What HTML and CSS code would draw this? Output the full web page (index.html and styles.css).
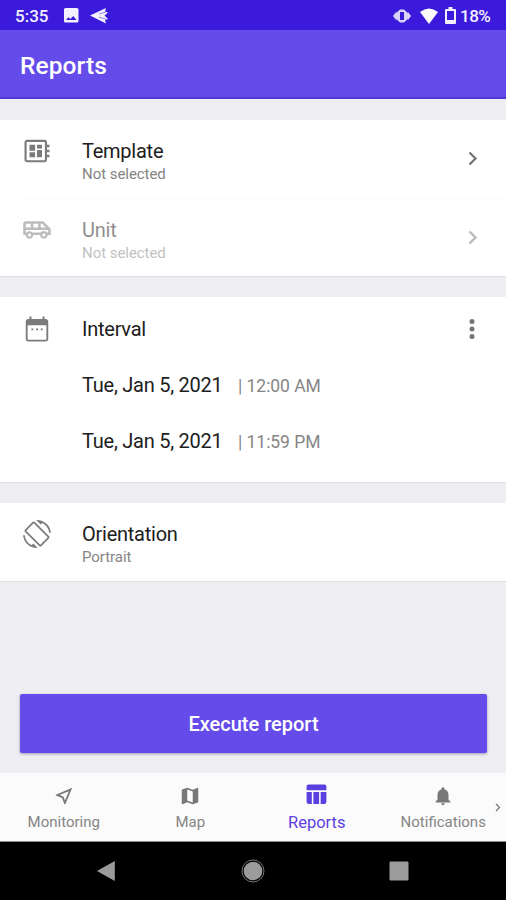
FILE: index.html
```html
<!DOCTYPE html>
<html lang="en">
<head>
<meta charset="utf-8">
<title>Reports</title>
<link rel="stylesheet" href="styles.css">
</head>
<body>
<div class="screen">
  <div class="status">
    <span class="clock">5:35</span>
    <svg class="s-image" viewBox="3 3 18 18"><path d="M21 19V5c0-1.100-.9-2-2-2H5c-1.100 0-2 .9-2 2v14c0 1.100.9 2 2 2h14c1.100 0 2-.9 2-2zM8.500 14.500l2.500 2 3.500-3.500 4 5H5.500z"/></svg>
    <svg class="s-plane" viewBox="0 0 18 16"><path d="M0 7.500 16 0l-1 3.500 3 1-3.500 3L18 11l-3 1 1 3.500z"/><path class="cut" d="M9 6l7-2M9 9.200l7 2"/></svg>
    <span class="spacer"></span>
    <svg class="s-vibrate" viewBox="0 0 18 14"><path d="M0 7l3-4v8zM18 7l-3-4v8z"/><path fill-rule="evenodd" d="M7 .5h4L15 4v6l-4 3.500H7L3 10V4zM7 3v8h4V3z"/></svg>
    <svg class="s-wifi" viewBox="0 0 18 16"><path d="M0 4Q9-3 18 4L9 16z"/></svg>
    <svg class="s-battery" viewBox="0 0 11 17"><path fill-rule="evenodd" d="M3.500 0h4v2H10q1 0 1 1v13q0 1-1 1H1q-1 0-1-1V3q0-1 1-1h2.500zM2 4v9h7V4z"/></svg>
    <span class="percent">18%</span>
  </div>
  <header class="appbar"><h1>Reports</h1></header>
  <main>
    <section class="card">
      <div class="row">
        <svg class="icon" viewBox="0 0 24 24"><path d="M22 9V7h-2V5c0-1.100-.9-2-2-2H4c-1.100 0-2 .9-2 2v14c0 1.100.9 2 2 2h14c1.100 0 2-.9 2-2v-2h2v-2h-2v-2h2v-2h-2V9h2zm-3.700 10.300H3.700V4.700h14.600v14.600zM6 13h4.500v4H6zm6-6h4v3h-4zM6 7h4.500v4.800H6zm6 4.200h4V17h-4z"/></svg>
        <div class="label"><span class="title">Template</span><span class="sub">Not selected</span></div>
        <svg class="chevron" viewBox="0 0 10 15"><path d="M1.500 1.500 7.500 7.500l-6 6"/></svg>
      </div>
      <div class="divider"></div>
      <div class="row disabled">
        <svg class="icon" viewBox="0 0 24 24"><path d="M17 5H3c-1.100 0-2 .89-2 2v9h2c0 1.650 1.340 3 3 3s3-1.350 3-3h5.500c0 1.650 1.340 3 3 3s3-1.350 3-3H23v-5l-6-6zm-2 2h1l3 3h-4V7zM9 7h4v3H9V7zM3 7h4v3H3V7zm3 10.250c-.69 0-1.250-.56-1.250-1.250s.56-1.250 1.250-1.250 1.250.56 1.250 1.250-.56 1.250-1.250 1.250zm11.500 0c-.69 0-1.250-.56-1.250-1.250s.56-1.250 1.250-1.250 1.250.56 1.250 1.250-.56 1.250-1.250 1.250zM21 14h-.78c-.55-.61-1.340-1-2.220-1h-1c-.88 0-1.670.39-2.220 1H8.220c-.55-.61-1.330-1-2.220-1s-1.670.39-2.220 1H3v-2h18v2z"/></svg>
        <div class="label"><span class="title">Unit</span><span class="sub">Not selected</span></div>
        <svg class="chevron" viewBox="0 0 10 15"><path d="M1.500 1.500 7.500 7.500l-6 6"/></svg>
      </div>
    </section>
    <section class="card interval">
      <div class="head">
        <svg class="icon" viewBox="0 0 24 24"><path d="M7.500 11.500h1.500v1.500H7.500zm3.750 0h1.500v1.500h-1.500zm3.750 0h1.500v1.500H15zM19 4h-1V2h-1.600v2H7.600V2H6v2H5c-1.110 0-2 .9-2 2v14c0 1.100.89 2 2 2h14c1.100 0 2-.9 2-2V6c0-1.100-.9-2-2-2zm.5 16q0 .5-.5.5H5q-.5 0-.5-.5V9h15z"/></svg>
        <span class="title">Interval</span>
        <svg class="more" viewBox="0 0 6 20"><circle cx="3" cy="2.600" r="2.500"/><circle cx="3" cy="10" r="2.500"/><circle cx="3" cy="17.400" r="2.500"/></svg>
      </div>
      <div class="date"><span class="title">Tue, Jan 5, 2021</span><span class="time">| 12:00 AM</span></div>
      <div class="date"><span class="title">Tue, Jan 5, 2021</span><span class="time">| 11:59 PM</span></div>
    </section>
    <section class="card">
      <div class="row last">
        <svg class="icon rotate" viewBox="0 0 24 24"><path d="M16.480 2.520c3.270 1.550 5.610 4.720 5.970 8.480h1.500C23.440 4.840 18.290 0 12 0l-.66.03 3.810 3.810 1.330-1.320zm-6.250-.77c-.59-.59-1.540-.59-2.120 0L1.750 8.110c-.59.59-.59 1.540 0 2.120l12.020 12.020c.59.59 1.540.59 2.120 0l6.360-6.360c.59-.59.59-1.540 0-2.120L10.230 1.750zm4.600 19.440L2.810 9.170l6.360-6.360 12.020 12.020-6.360 6.360zm-7.310.29C4.250 19.940 1.910 16.760 1.550 13H.05C.56 19.160 5.710 24 12 24l.66-.03-3.810-3.810-1.330 1.320z"/></svg>
        <div class="label"><span class="title">Orientation</span><span class="sub">Portrait</span></div>
      </div>
    </section>
    <button class="execute">Execute report</button>
  </main>
  <nav class="tabs">
    <div class="tab"><svg viewBox="0 0 24 24"><path d="M17.270 6.730l-4.240 10.130-1.320-3.420-.32-.83-.82-.32-3.430-1.330 10.130-4.230M21 3L3 10.530v.98l6.840 2.650L12.480 21h.98L21 3z"/></svg><span>Monitoring</span></div>
    <div class="tab"><svg viewBox="0 0 24 24"><path d="M20.500 3l-.16.03L15 5.100 9 3 3.360 4.900c-.21.07-.36.25-.36.48V20.500c0 .28.22.5.5.5l.16-.03L9 18.900l6 2.100 5.640-1.900c.21-.07.36-.25.36-.48V3.500c0-.28-.22-.5-.5-.5zM15 19l-6-2.110V5l6 2.110V19z"/></svg><span>Map</span></div>
    <div class="tab active"><svg viewBox="0 0 24 24"><path d="M9 9.500h5.500V21H9zM16 21h3.500c1.100 0 2-.9 2-2V9.500H16V21zM19.500 2.500h-15c-1.100 0-2 .9-2 2V8h19V4.500c0-1.100-.9-2-2-2zM2.500 19c0 1.100.9 2 2 2h3V9.500h-5V19z"/></svg><span>Reports</span></div>
    <div class="tab"><svg viewBox="0 0 24 24"><path d="M12 22c1.100 0 2-.9 2-2h-4c0 1.100.89 2 2 2zm6-6v-5c0-3.070-1.640-5.640-4.500-6.320V4c0-.83-.67-1.500-1.500-1.500s-1.500.67-1.500 1.500v.68C7.630 5.360 6 7.920 6 11v5l-2 2v1h16v-1l-2-2z"/></svg><span>Notifications</span></div>
    <svg class="next" viewBox="0 0 6 9"><path d="M1 1l3.500 3.500L1 8"/></svg>
  </nav>
  <div class="sysnav">
    <svg viewBox="0 0 24 24"><path d="M20.800 2v20L3 12z"/></svg>
    <svg viewBox="0 0 24 24"><circle cx="12" cy="12" r="9.300"/><circle class="ring" cx="12" cy="12" r="11"/></svg>
    <svg viewBox="0 0 24 24"><rect x="2.500" y="2.500" width="19" height="19" rx="1.200"/></svg>
  </div>
</div>
</body>
</html>
```

FILE: styles.css
```css
* { box-sizing: border-box; }
body { margin: 0; font-family: Roboto, "Liberation Sans", sans-serif; }
svg { display: block; flex: none; fill: currentColor; }
span { white-space: nowrap; }

.screen { width: 506px; height: 900px; display: flex; flex-direction: column; background: #eeeef2; overflow: hidden; }

.status { height: 30px; flex: none; display: flex; align-items: center; padding: 1px 15px 0; background: #3b1adb; color: #f3f0ff; font-size: 17px; font-weight: 500; }
.clock { width: 49px; letter-spacing: 0; }
.s-image { width: 14.5px; height: 14.5px; }
.s-plane { width: 18px; height: 16px; margin-left: 11.5px; }
.cut { fill: none; stroke: #3b1adb; stroke-width: .5; }
.spacer { flex: 1; }
.s-vibrate { width: 18px; height: 14px; margin-right: 9px; color: #d9d2fa; }
.s-wifi { width: 18px; height: 16px; margin-right: 7px; color: #fff; }
.s-battery { width: 11px; height: 17px; margin-right: 4px; }
.percent { width: 31px; letter-spacing: -0.5px; }

.appbar { height: 69px; flex: none; display: flex; align-items: center; padding: 4px 20px 0; background: #654cea; border-bottom: 2px solid #5236d2; color: #fff; }
h1 { margin: 0; font-size: 24.5px; line-height: 28px; font-weight: 500; letter-spacing: 0.1px; }

main { flex: 1; display: flex; flex-direction: column; gap: 21px; padding-top: 21px; }
.card { background: #fff; box-shadow: 0 1px 1px #dfdfe4; }
.row { height: 78px; display: flex; align-items: flex-start; padding: 16px 28px 0 22px; }
.divider { height: 1px; margin-left: 20px; background: #fafafa; }
.disabled { height: 77px; }
.icon { width: 30px; height: 30px; color: #7b7b7b; }
.rotate { width: 28px; height: 28px; margin: 1px 1px 0; }
.label { flex: 1; margin-left: 30px; padding-top: 2px; display: flex; flex-direction: column; }
.title { font-size: 20px; line-height: 27px; letter-spacing: -0.25px; color: #202020; }
.sub { font-size: 15px; line-height: 19px; letter-spacing: -0.05px; color: #858585; }
.chevron { width: 10px; height: 15px; margin-top: 15px; fill: none; stroke: #757575; stroke-width: 2.3; }
.disabled > * { opacity: .5; }

.interval { height: 185px; padding-top: 3px; }
.head { height: 57px; display: flex; align-items: center; padding: 0 31px 0 22px; }
.head .title { flex: 1; margin-left: 30px; padding-top: 1px; }
.more { width: 6px; height: 20px; color: #757575; }
.date { height: 56px; display: flex; align-items: center; padding-left: 82px; }
.time { margin-left: 15.5px; font-size: 17.5px; letter-spacing: -0.05px; color: #858585; padding-top: 2px; }

.execute { margin: auto 19px 20px 20px; height: 59px; border: 0; border-radius: 2px; background: #654cea; color: #fff; font: 500 20px Roboto, sans-serif; box-shadow: 0 1px 3px #9b97b5; }

.tabs { height: 69px; flex: none; display: flex; position: relative; background: #fbfbfb; border-bottom: 1px solid #8c8c8c; color: #858585; }
.tab { width: 126.5px; padding-left: 1px; display: flex; flex-direction: column; align-items: center; font-size: 15px; padding-top: 12px; }
.tab svg { width: 22px; height: 22px; color: #777; }
.tab span { line-height: 18px; margin-top: 6px; }
.tab.active { color: #5b3fe0; font-size: 16.5px; padding-top: 9px; }
.tab.active svg { width: 25px; height: 25px; color: #5b3fe0; }
.tab.active span { margin-top: 7px; }
.next { position: absolute; right: 5px; top: 30px; width: 6px; height: 9px; fill: none; stroke: #777; stroke-width: 1.3; }

.sysnav { height: 58px; flex: none; display: flex; justify-content: space-between; align-items: center; padding: 0 95px 0 94px; background: #000; color: #9b9b9b; }
.sysnav svg { width: 24px; height: 24px; }
.ring { fill: none; stroke: #777; stroke-width: 1; }
```
